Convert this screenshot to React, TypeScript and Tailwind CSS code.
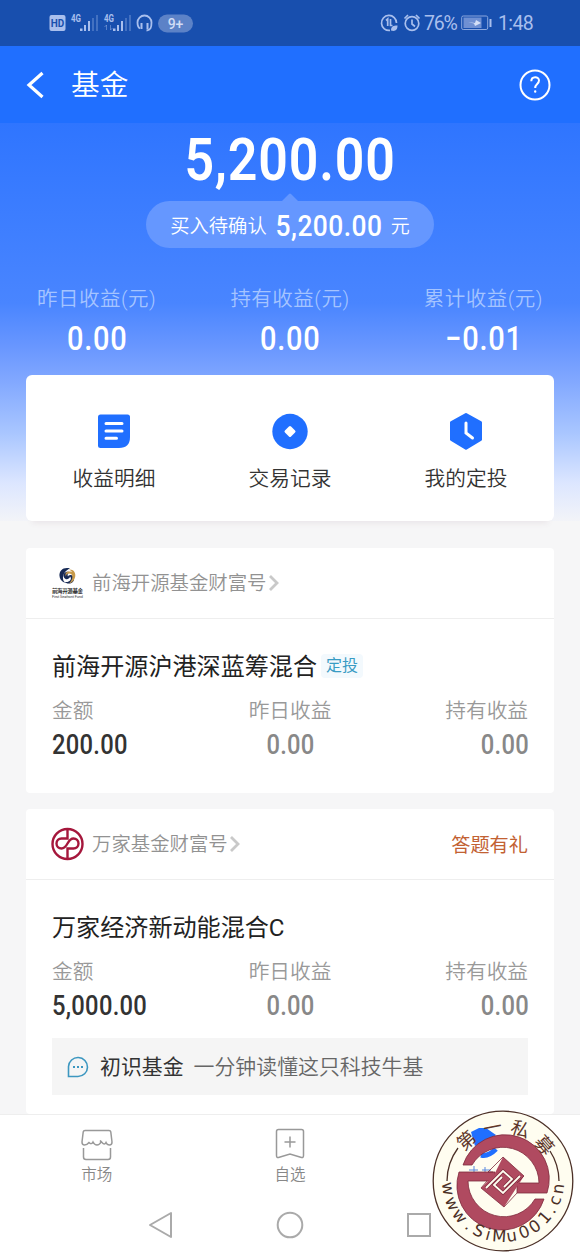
import type { ReactNode } from "react";

const summary = [
  { label: "昨日收益(元)", value: "0.00" },
  { label: "持有收益(元)", value: "0.00" },
  { label: "累计收益(元)", value: "−0.01" },
];

function StatusBar() {
  return (
    <div className="flex h-[46px] items-center bg-[#184fae] pl-[49px] text-[#a9bfed]">
      <svg width="145" height="22" viewBox="0 0 145 22" className="shrink-0">
        <rect x="0.5" y="3" width="16" height="16" rx="2" fill="#a9bfed" />
        <text x="8.5" y="15" fontSize="10.5" fontWeight="700" textAnchor="middle" fill="#184fae" fontFamily="Roboto" textLength="13.5" lengthAdjust="spacingAndGlyphs">HD</text>
        {[22, 55].map((x) => (
          <g key={x} fill="#a9bfed">
            <text x={x} y="10" fontSize="10" fontWeight="700" fontFamily="Roboto" textLength="10" lengthAdjust="spacingAndGlyphs">4G</text>
            <rect x={x + 9} y="16.5" width="2.5" height="2.5" />
            <rect x={x + 13} y="13" width="2" height="6" />
            <rect x={x + 17} y="9" width="2" height="10" />
            <rect x={x + 21} y="6" width="2" height="13" opacity=".3" />
            <rect x={x + 25} y="3" width="2" height="16" opacity=".3" />
          </g>
        ))}
        <path d="M57.500 13v5M55.500 15l2-2M61.500 18v-5M63.500 16l-2 2" stroke="#a9bfed" opacity=".45" fill="none" />
        <path d="M91 16.500c-2.500-1.500-2.500-3.500-2.500-6a7 7 0 0 1 14 0c0 5.500-1 7.500-5 8" fill="none" stroke="#a9bfed" strokeWidth="1.800" />
        <path d="M92.500 11v6M98.500 11v6" stroke="#a9bfed" strokeWidth="2" />
        <rect x="109" y="2.500" width="35" height="18" rx="9" fill="#5c82c7" />
        <text x="126.500" y="16.500" fontSize="14" fontWeight="500" textAnchor="middle" fill="#d0dcf5" fontFamily="Roboto">9+</text>
      </svg>
      <svg width="42" height="22" viewBox="0 0 42 22" className="ml-[186px] shrink-0" fill="none" stroke="#a9bfed" strokeWidth="1.700">
        <path d="M16.500 11A7.500 7.500 0 1 0 10 18.400" />
        <path d="M6 8.500 7.700 7v7M10.500 7v6.500h2" />
        <path d="M11 18.500c0-4 2-5 6.500-5 0 4-2 6.500-6.500 5z" fill="#a9bfed" stroke="none" />
        <circle cx="32" cy="11.500" r="6.800" />
        <path d="M32 7.500v4.500l3 2.500M24.500 6.500l3.500-3.500M39.500 6.500 36 3" />
      </svg>
      <span className="mt-[2px] ml-[2px] w-[36px] text-[19.500px] leading-none tracking-[-1.2px] whitespace-nowrap">76%</span>
      <svg width="32" height="18" viewBox="0 0 32 18" className="ml-px shrink-0">
        <rect x="0.700" y="2" width="26" height="13.500" rx="1.500" fill="none" stroke="#8ca8df" />
        <rect x="2.500" y="3.500" width="18" height="10.500" fill="#6f90d3" />
        <path d="m7 8 7 1 1-3 5 3-6 3-1-2.500z" fill="#d5e0f7" />
        <path d="M29.500 5v8" stroke="#a9bfed" strokeWidth="2" />
      </svg>
      <span className="mt-[2px] ml-[5px] text-[19.500px] leading-none tracking-[-0.6px]">1:48</span>
    </div>
  );
}

function Header() {
  return (
    <header className="flex h-[77px] items-center bg-[#206fff] pr-[29px] pl-[26px] text-white">
      <svg width="20" height="28" viewBox="0 0 20 28" fill="none" stroke="white" strokeWidth="3.200">
        <path d="M16.500 2 3 14l13.500 12" />
      </svg>
      <h1 className="mt-[2px] ml-[25px] text-[28.700px] leading-none font-[350]">基金</h1>
      <svg width="32" height="32" viewBox="0 0 32 32" fill="none" stroke="white" strokeWidth="2" className="ml-auto">
        <circle cx="16" cy="16" r="14.500" />
        <path d="M12.300 12.300c0-5.500 7.700-5.300 7.700-.7 0 3.500-3.800 3.500-3.800 7.400" />
        <circle cx="16.200" cy="22.500" r=".6" strokeWidth="1.200" />
      </svg>
    </header>
  );
}

function Summary() {
  return (
    <section className="flex h-[252px] flex-col items-center text-white">
      <div className="mt-[5px] h-[63px] scale-x-[0.88] text-[59px] leading-[63px] font-semibold tracking-[0.9px]">5,200.00</div>
      <svg width="16" height="8" viewBox="0 0 16 8" className="mt-[2px] shrink-0">
        <path d="M0 8 7 1q1-1 2 0l7 7z" fill="#6597ff" />
      </svg>
      <div className="flex h-[47px] w-[288px] items-center justify-center rounded-full bg-[#6597ff]">
        <span className="mt-[6px] text-[19.300px] font-[350]">买入待确认</span>
        <span className="mt-px w-[124px] scale-x-[0.88] text-center text-[30px] font-medium tracking-[0.5px]">5,200.00</span>
        <span className="mt-[6px] text-[19px] font-[350]">元</span>
      </div>
      <div className="mt-[38px] flex w-full">
        {summary.map((item) => (
          <div key={item.label} className="flex flex-1 flex-col items-center">
            <span className="text-[20.500px] leading-[26px] font-[350] tracking-[0.5px] text-[#a5c4ff]">{item.label}</span>
            <span className="mt-[10px] scale-x-[0.88] pl-px text-[33px] leading-[34px] font-medium tracking-[0.8px]">{item.value}</span>
          </div>
        ))}
      </div>
    </section>
  );
}

function Action({ label, children }: { label: string; children: ReactNode }) {
  return (
    <div className="flex flex-1 flex-col items-center pt-[36px]">
      <svg width="40" height="40" viewBox="0 0 40 40" fill="none" stroke="white" strokeWidth="3" strokeLinecap="round">
        {children}
      </svg>
      <span className="mt-[13px] text-[20.700px] leading-[30px] font-[350] text-[#333]">{label}</span>
    </div>
  );
}

function Actions() {
  return (
    <div className="mx-[26px] flex h-[146px] rounded-md bg-white shadow-[0_8px_6px_-6px_#e9e4e8]">
      <Action label="收益明细">
        <path d="M6.500 3.500h27q2.500 0 2.500 2.500v20q0 11-11 11H6.500Q4 37 4 34.500V6q0-2.500 2.500-2.500z" fill="#206fff" stroke="none" />
        <path d="M12 12.500h16M12 20h16M12 27.300h10.500" />
      </Action>
      <Action label="交易记录">
        <circle cx="20" cy="20.500" r="17.700" fill="#206fff" stroke="none" />
        <path d="m20 16.500 4 4-4 4-4-4z" fill="white" strokeLinejoin="round" />
      </Action>
      <Action label="我的定投">
        <path d="M20 3.500 34.500 11.500v17L20 37.200 5.500 28.500v-17z" fill="#206fff" stroke="#206fff" strokeLinejoin="round" />
        <path d="M20 12v10l6.500 5" />
      </Action>
    </div>
  );
}

function QianhaiLogo() {
  return (
    <svg width="34" height="34" viewBox="0 0 34 34" className="shrink-0">
      <path d="M19 2.500C7-.5 5 14 14 17c-4-4-2-12 5-14.500z" fill="#172a55" />
      <path d="M20 6.500c-5-2-9 1-7 5 2 3.500 6 1 6-1 3 3-2 7-6 5 5 5 13 0 9-5-2-3-5-1-5 0-1-2 0-4 3-4z" fill="#172a55" />
      <path d="M18 3.500c8-1 9 11 0 14 5-5 4-10 0-10-2 0-3 1-3 3-2-4 2-6 6-4.500-1-1.500-2-2-3-2.500z" fill="#c79a4b" />
      <text x="1" y="27" fontSize="5.500" fontWeight="700" fill="#333" textLength="31">前海开源基金</text>
      <text x="1" y="31.500" fontSize="3.800" fill="#333" fontFamily="Roboto" textLength="31">First Seafront Fund</text>
    </svg>
  );
}

function WanjiaLogo() {
  return (
    <svg width="34" height="34" viewBox="0 0 34 34" fill="none" stroke="#a5173c" strokeWidth="2.400" className="shrink-0">
      <circle cx="16.500" cy="17" r="15" />
      <path d="M16.500 2v9.500H10.500a5 5 0 0 0 0 10c6.500 0 5.500-10 12-10a5 5 0 0 1 0 10h-6V32" />
    </svg>
  );
}

interface FundProps {
  logo: ReactNode;
  source: string;
  name: string;
  amount: string;
  extra?: string;
  tag?: string;
  children?: ReactNode;
}

function FundCard({ logo, source, name, amount, extra, tag, children }: FundProps) {
  return (
    <div className="mx-[26px] h-full rounded bg-white">
      <div className="flex h-[71px] items-center border-b border-[#eee] pr-[26px] pl-[25px]">
        {logo}
        <span className="mt-[2px] ml-[7px] text-[19.400px] leading-none font-[350] text-[#929292]">{source}</span>
        <svg width="12" height="18" viewBox="0 0 12 18" fill="none" stroke="#c9c9c9" strokeWidth="2.800" className="ml-px">
          <path d="m2 2 7 7-7 7" />
        </svg>
        {extra && <span className="mt-[3px] ml-auto text-[19.200px] leading-none text-[#c26132]">{extra}</span>}
      </div>
      <div className="px-[26px] pt-[31px]">
        <div className="flex h-[34px] items-center">
          <span className="text-[24.100px] leading-none text-[#222]">{name}</span>
          {tag && <span className="-mt-[2px] ml-[4px] rounded-sm bg-[#f3f9fd] px-[5px] text-[16px] leading-[24px] text-[#399cc4]">{tag}</span>}
        </div>
        <div className="mt-[14px] flex text-[20.700px] leading-[26px] font-[350] text-[#999]">
          <span className="flex-1">金额</span>
          <span className="flex-1 text-center">昨日收益</span>
          <span className="flex-1 text-right">持有收益</span>
        </div>
        <div className="mt-[4px] flex text-[27px] leading-[34px] font-medium tracking-[0.3px] text-[#888]">
          <span className="flex-1 origin-left scale-x-[0.88] text-[#333]">{amount}</span>
          <span className="flex-1 scale-x-[0.88] text-center">0.00</span>
          <span className="-mr-px flex-1 origin-right scale-x-[0.88] text-right">0.00</span>
        </div>
        {children}
      </div>
    </div>
  );
}

// angles are rotations of the upright letter around the centre of the stamp
const ringText = [
  { c: "w", a: 82 }, { c: "w", a: 66 }, { c: "w", a: 51 }, { c: ".", a: 37.5 },
  { c: "S", a: 26 }, { c: "i", a: 15.5 }, { c: "M", a: 4 }, { c: "u", a: -9 },
  { c: "0", a: -22.5 }, { c: "0", a: -35 }, { c: "1", a: -49 }, { c: ".", a: -59 },
  { c: "c", a: -69.5 }, { c: "n", a: -82 },
];

const ringTitle = [
  { c: "第", a: -42 }, { c: "一", a: -11 }, { c: "私", a: 18.5 }, { c: "募", a: 49 },
];

function Stamp() {
  return (
    <svg width="142" height="142" viewBox="-71 -71 142 142" className="absolute right-[6px] bottom-[5px]">
      <circle r="69.800" fill="#fffdf0" stroke="#4c3027" strokeWidth="1.300" />
      <path d="M-56 0A56 56 0 0 1-45-33M47-30A56 56 0 0 1 56 0" fill="none" stroke="#4c3027" strokeWidth="1.300" />
      <path d="M-32-49-24-53-17-53-7-46-12-42-28-35z" fill="#206fff" />
      <path d="M-22-26q7 2 15-6" fill="none" stroke="#206fff" strokeWidth="5" />
      <path d="M-34-11h9M-29-15v8M-21-11h9M-18-14v5" fill="none" stroke="#5889de" />
      <g fill="#b04a60" stroke="#7f2b3d" strokeWidth=".8">
        <path d="M-40-16A44 44 0 0 1 44 12H14V2H36A36 36 0 0 0-31-16z" />
        <path d="M-44-9H-8V0H-35A36 36 0 0 0 32 18H41A44 44 0 0 1-44-9z" />
        <path d="M0-24 21-5 1 26-22 7-9-6z" stroke="none" />
        <path d="M14 12 1 26-22 7-16 0M-10-9-15-9 0-24 21-5 14 2" fill="none" />
      </g>
      <path d="M-17 7 0-10 9-2 1 6M17-5 0 12-9 4-1-4" fill="none" stroke="#7f2b3d" strokeWidth="3.200" />
      <path d="M-17 7 0-10 9-2 1 6M17-5 0 12-9 4-1-4" fill="none" stroke="#fffdf0" strokeWidth="1.900" />
      {ringTitle.map((l) => (
        <text key={l.c} transform={`rotate(${l.a}) translate(0 -48)`} textAnchor="middle" fontSize="18.500" fill="#60372b">{l.c}</text>
      ))}
      {ringText.map((l, i) => (
        <text key={i} transform={`rotate(${l.a}) translate(0 61)`} textAnchor="middle" fontSize="16.500" fill="#4c3027" fontFamily="DejaVu Sans">{l.c}</text>
      ))}
    </svg>
  );
}

function BottomBar() {
  return (
    <div className="relative mt-auto h-[143px] bg-white">
      <div className="flex h-[78px] border-t border-[#eee] text-[15.500px] font-[350] text-[#888]">
        <div className="flex flex-1 flex-col items-center pt-[13px]">
          <svg width="34" height="34" viewBox="0 0 34 34" fill="none" stroke="#999" strokeWidth="1.500">
            <path d="M5 2.500h24q1.500 0 1.800 1.500l1.200 10q0 3-2.500 3-2.500 0-3.500-2.500-1.500 3-4 0t-1-.5q-1.500 3-4 3t-4-3q-1.500 3-4 .5-2 2.500-4.500 2.500-2.500 0-2.500-3L3.200 4Q3.500 2.500 5 2.500z" />
            <path d="M3.500 20v9Q3.500 31.500 6 31.500h22q2.500 0 2.500-2.500v-9" />
          </svg>
          <span className="mt-px leading-[25px]">市场</span>
        </div>
        <div className="flex flex-1 flex-col items-center pt-[13px]">
          <svg width="34" height="34" viewBox="0 0 34 34" fill="none" stroke="#999" strokeWidth="1.500">
            <path d="M5.500 1.500h23q2 0 2 2v24q0 2.500-2 2L17 26 5.500 29.500q-2 .5-2-2v-24q0-2 2-2zM17 8.500v11M11.500 14h11" />
          </svg>
          <span className="mt-px leading-[25px]">自选</span>
        </div>
        <div className="flex-1" />
      </div>
      <div className="flex justify-center gap-[101px] pt-[19px]">
        <svg width="28" height="28" viewBox="0 0 28 28" fill="none" stroke="#aaa" strokeWidth="2" strokeLinejoin="round">
          <path d="M3 14 24 2v24z" />
        </svg>
        <svg width="28" height="28" viewBox="0 0 28 28" fill="none" stroke="#aaa" strokeWidth="2">
          <circle cx="14" cy="14" r="12.300" />
        </svg>
        <svg width="28" height="28" viewBox="0 0 28 28" fill="none" stroke="#aaa" strokeWidth="2">
          <rect x="3" y="3" width="22" height="22" />
        </svg>
      </div>
      <Stamp />
    </div>
  );
}

export default function App() {
  return (
    <div className="flex h-[1257px] w-[580px] flex-col overflow-hidden bg-[#f6f6f7] font-[Roboto,'Noto_Sans_CJK_SC',sans-serif]">
      <StatusBar />
      <Header />
      <div className="bg-[linear-gradient(#2f75ff_0px,#4985ff_180px,#6695ff_220px,#83a9ff_260px,#a9c6ff_310px,#dce6ff_360px,#f6f6f7_404px)]">
        <Summary />
        <Actions />
      </div>
      <div className="mt-[27px] h-[245px]">
        <FundCard logo={<QianhaiLogo />} source="前海开源基金财富号" name="前海开源沪港深蓝筹混合" amount="200.00" tag="定投" />
      </div>
      <div className="mt-[16px] h-[305px]">
        <FundCard logo={<WanjiaLogo />} source="万家基金财富号" name="万家经济新动能混合C" amount="5,000.00" extra="答题有礼">
          <div className="mt-[15px] flex h-[57px] items-center bg-[#f5f5f5] pl-[15px] text-[20.900px] leading-none">
            <svg width="22" height="22" viewBox="0 0 22 22" fill="none" stroke="#3c97c0" strokeWidth="1.600">
              <path d="M1.500 20.500v-10A9.500 9.500 0 1 1 11 20.500z" />
              <path d="M6 11h2M10 11h2M14 11h2" strokeWidth="2" />
            </svg>
            <span className="mt-[2px] ml-[11px] text-[#333]">初识基金</span>
            <span className="mt-[2px] ml-[10px] font-[350] text-[#666]">一分钟读懂这只科技牛基</span>
          </div>
        </FundCard>
      </div>
      <BottomBar />
    </div>
  );
}
